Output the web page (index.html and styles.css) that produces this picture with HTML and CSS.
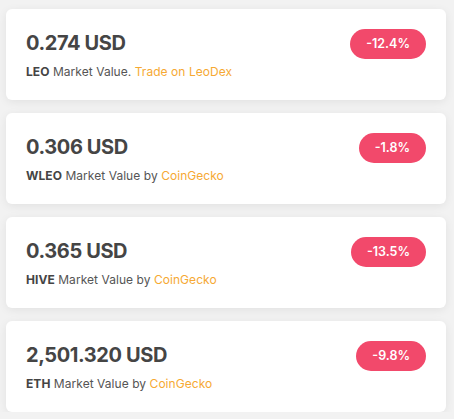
FILE: index.html
```html
<!DOCTYPE html>
<html>
<head>
<meta charset="utf-8">
<link rel="stylesheet" href="styles.css">
</head>
<body>
<div class="list">
  <div class="card">
    <div class="info">
      <div class="price">0.274 USD</div>
      <div class="sub"><b>LEO</b> Market Value. <a class="link">Trade on LeoDex</a></div>
    </div>
    <div class="badge">-12.4%</div>
  </div>
  <div class="card">
    <div class="info">
      <div class="price">0.306 USD</div>
      <div class="sub"><b>WLEO</b> Market Value by <a class="link">CoinGecko</a></div>
    </div>
    <div class="badge">-1.8%</div>
  </div>
  <div class="card">
    <div class="info">
      <div class="price">0.365 USD</div>
      <div class="sub"><b>HIVE</b> Market Value by <a class="link">CoinGecko</a></div>
    </div>
    <div class="badge">-13.5%</div>
  </div>
  <div class="card">
    <div class="info">
      <div class="price">2,501.320 USD</div>
      <div class="sub"><b>ETH</b> Market Value by <a class="link">CoinGecko</a></div>
    </div>
    <div class="badge">-9.8%</div>
  </div>
</div>
</body>
</html>
```
FILE: styles.css
```css
html, body {
  margin: 0;
  padding: 0;
  background: #f2f2f2;
  font-family: Inter, "Noto Sans", sans-serif;
  color: #444;
}
.list {
  display: flex;
  flex-direction: column;
  gap: 13px;
  padding: 9px 8px 0 6px;
}
.card {
  background: #fff;
  border-radius: 6px;
  box-shadow: 0 2px 10px rgba(0,0,0,0.07);
  display: flex;
  justify-content: space-between;
  align-items: flex-start;
  padding: 20px 20px 0 20px;
  height: 71px;
}
.price {
  font-size: 20px;
  font-weight: 700;
  line-height: 28px;
  letter-spacing: -0.4px;
  color: #454545;
}
.sub {
  margin-top: 5px;
  font-size: 12px;
  line-height: 20px;
  letter-spacing: 0.05px;
  color: #555;
}
.sub b {
  font-weight: 700;
  color: #444;
}
.link {
  color: #f6a933;
}
.badge {
  background: #f2496b;
  color: #fff;
  font-size: 12.5px;
  font-weight: 600;
  height: 30px;
  line-height: 30px;
  border-radius: 15px;
  padding: 0 16px;
}
```
